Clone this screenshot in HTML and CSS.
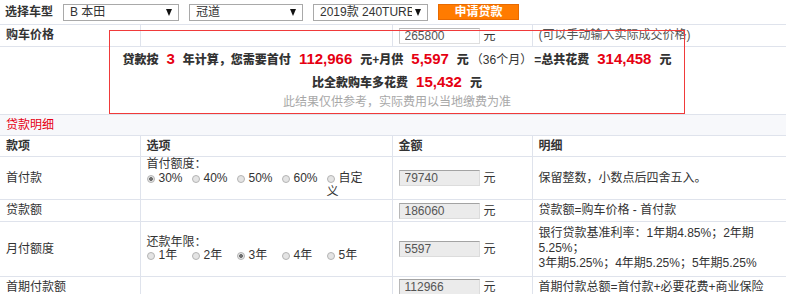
FILE: index.html
```html
<!DOCTYPE html>
<html lang="zh-CN">
<head>
    <meta charset="UTF-8">
    <title>贷款计算器</title>
    <link rel="stylesheet" href="styles.css">
</head>
<body>
    <div class="loan">
        <table class="loan-table">
            <colgroup>
                <col class="col-item">
                <col class="col-option">
                <col class="col-amount">
                <col class="col-detail">
            </colgroup>
            <tr class="row-select">
                <td colspan="4">
                    <div class="car-picker">
                        <span class="picker-label">选择车型</span>
                        <div class="fake-select sel-brand"><span class="sel-text">B 本田</span><i class="sel-arrow"></i></div>
                        <div class="fake-select sel-series"><span class="sel-text">冠道</span><i class="sel-arrow"></i></div>
                        <div class="fake-select sel-model"><span class="sel-text">2019款 240TURBO</span><i class="sel-arrow"></i></div>
                        <button class="apply-btn" type="button">申请贷款</button>
                    </div>
                </td>
            </tr>
            <tr class="row-price">
                <td class="item-name strong">购车价格</td>
                <td></td>
                <td><input class="amount-input price-input" type="text" value="265800"><span class="unit">元</span></td>
                <td class="hint">(可以手动输入实际成交价格)</td>
            </tr>
            <tr class="row-result">
                <td colspan="4"></td>
            </tr>
            <tr class="row-section">
                <td colspan="4" class="section-title">贷款明细</td>
            </tr>
            <tr class="row-head">
                <td class="strong">款项</td>
                <td class="strong">选项</td>
                <td class="strong">金额</td>
                <td class="strong">明细</td>
            </tr>
            <tr class="row-down">
                <td>首付款</td>
                <td class="options options-down">
                    <div>首付额度：</div>
                    <div class="radio-list">
                        <label class="radio-item"><input type="radio" name="down" checked>30%</label><label class="radio-item"><input type="radio" name="down">40%</label><label class="radio-item"><input type="radio" name="down">50%</label><label class="radio-item"><input type="radio" name="down">60%</label><label class="radio-item"><input type="radio" name="down">自定义</label>
                    </div>
                </td>
                <td><input class="amount-input" type="text" value="79740" readonly><span class="unit">元</span></td>
                <td>保留整数，小数点后四舍五入。</td>
            </tr>
            <tr class="row-loan">
                <td>贷款额</td>
                <td></td>
                <td><input class="amount-input" type="text" value="186060" readonly><span class="unit">元</span></td>
                <td>贷款额=购车价格 - 首付款</td>
            </tr>
            <tr class="row-month">
                <td>月付额度</td>
                <td class="options options-years">
                    <div>还款年限：</div>
                    <div class="radio-list">
                        <label class="radio-item"><input type="radio" name="years">1年</label><label class="radio-item"><input type="radio" name="years">2年</label><label class="radio-item"><input type="radio" name="years" checked>3年</label><label class="radio-item"><input type="radio" name="years">4年</label><label class="radio-item"><input type="radio" name="years">5年</label>
                    </div>
                </td>
                <td><input class="amount-input" type="text" value="5597" readonly><span class="unit">元</span></td>
                <td class="rates">银行贷款基准利率：1年期4.85%；2年期 5.25%；<br>3年期5.25%；4年期5.25%；5年期5.25%</td>
            </tr>
            <tr class="row-first">
                <td>首期付款额</td>
                <td></td>
                <td><input class="amount-input" type="text" value="112966" readonly><span class="unit">元</span></td>
                <td>首期付款总额=首付款+必要花费+商业保险</td>
            </tr>
        </table>

        <div class="result-box">
            <p class="result-line"><b>贷款按</b><em>3</em><b>年计算，您需要首付</b><em>112,966</em><b>元+月供</b><em>5,597</em><b>元</b><span class="months">（36个月）</span><b>=总共花费</b><em>314,458</em><b>元</b></p>
            <p class="result-line"><b>比全款购车多花费</b><em>15,432</em><b>元</b></p>
            <p class="result-note">此结果仅供参考，实际费用以当地缴费为准</p>
        </div>
    </div>
</body>
</html>
```

FILE: styles.css
```css
/* Base */
body {
    margin: 0;
    font-family: "Liberation Sans", "Noto Sans CJK SC", sans-serif;
    font-size: 12px;
    color: #333;
    background-color: #fff;
}

.loan {
    position: relative;
    width: 786px;
}

/* Table grid */
.loan-table {
    width: 786px;
    border-collapse: collapse;
    table-layout: fixed;
}
.col-item { width: 140px; }
.col-option { width: 252px; }
.col-amount { width: 140px; }
.col-detail { width: 254px; }

.loan-table td {
    border-bottom: 1px solid #dfe3ec;
    border-left: 1px solid #dfe3ec;
    padding: 0 6px;
    height: 20px;
    line-height: 20px;
    vertical-align: middle;
}
.loan-table td:first-child {
    border-left: none;
}
.strong {
    font-weight: 700;
}

/* Car picker row */
.row-select td {
    height: 24px;
    padding: 0 5px;
}
.car-picker {
    display: flex;
    align-items: center;
    gap: 10px;
}
.picker-label {
    font-weight: 700;
}
.fake-select {
    display: flex;
    align-items: center;
    height: 15px;
    border: 1px solid #a9a9a9;
    background-color: #fff;
    padding: 0 6px;
    line-height: 15px;
}
.sel-text {
    flex: 1;
    white-space: nowrap;
    overflow: hidden;
}
.sel-arrow {
    width: 0;
    height: 0;
    border-left: 3.5px solid transparent;
    border-right: 3.5px solid transparent;
    border-top: 7px solid #111;
    margin-left: 3px;
}
.sel-brand { width: 102px; }
.sel-series { width: 100px; }
.sel-model { width: 101px; }
.apply-btn {
    width: 81px;
    height: 16px;
    padding: 0;
    border: 1px solid #e86a00;
    background-color: #ff7b00;
    color: #fff;
    font-family: inherit;
    font-size: 12px;
    font-weight: 700;
    line-height: 14px;
}

/* Inputs */
.amount-input {
    width: 81px;
    height: 16px;
    box-sizing: border-box;
    padding: 0 0 0 5px;
    margin: 0;
    border: 1px solid;
    border-color: #a3a3a3 #dcdcdc #dcdcdc #b8b8b8;
    background-color: #ebebeb;
    font-family: inherit;
    font-size: 12px;
    color: #555;
    vertical-align: middle;
}
.price-input {
    background-color: #fff;
    border-color: #b9b9b9 #dedede #dedede #c8c8c8;
}
.unit {
    margin-left: 4px;
    vertical-align: middle;
}
.hint {
    color: #555;
}

/* Sections */
.row-result td {
    height: 67px;
}
.section-title {
    background-color: #f7f8fb;
    color: #e60012;
}

/* Radio options */
.options {
    line-height: 14px !important;
}
.radio-list {
    display: flex;
}
.radio-item {
    width: 45px;
    flex: none;
}
.radio-item input {
    appearance: none;
    width: 8px;
    height: 8px;
    margin: 0 4px 0 0;
    border: 1px solid #b4b4b4;
    border-radius: 50%;
    background-color: #e4e4e4;
    vertical-align: -1px;
}
.radio-item input:checked {
    background: radial-gradient(circle, #6f6f6f 0 1.6px, #e4e4e4 2.2px);
}
.row-down td {
    height: 42px;
}
.row-month td {
    height: 54px;
}
.options-years {
    line-height: 13px !important;
}
.rates {
    line-height: 15px !important;
}

/* Result overlay */
.result-box {
    position: absolute;
    top: 30px;
    left: 109px;
    width: 576px;
    height: 84px;
    box-sizing: border-box;
    border: 1px solid #f03a3a;
    padding-top: 17px;
    text-align: center;
}
.result-line {
    margin: 0;
    line-height: 22px;
    font-weight: 700;
    color: #333;
}
.result-line em {
    font-style: normal;
    font-size: 15px;
    color: #e60012;
    padding: 0 8px;
}
.months {
    font-weight: 400;
    padding: 0 2px;
}
.result-note {
    margin: 0;
    line-height: 16px;
    color: #a8a8a8;
}
```
